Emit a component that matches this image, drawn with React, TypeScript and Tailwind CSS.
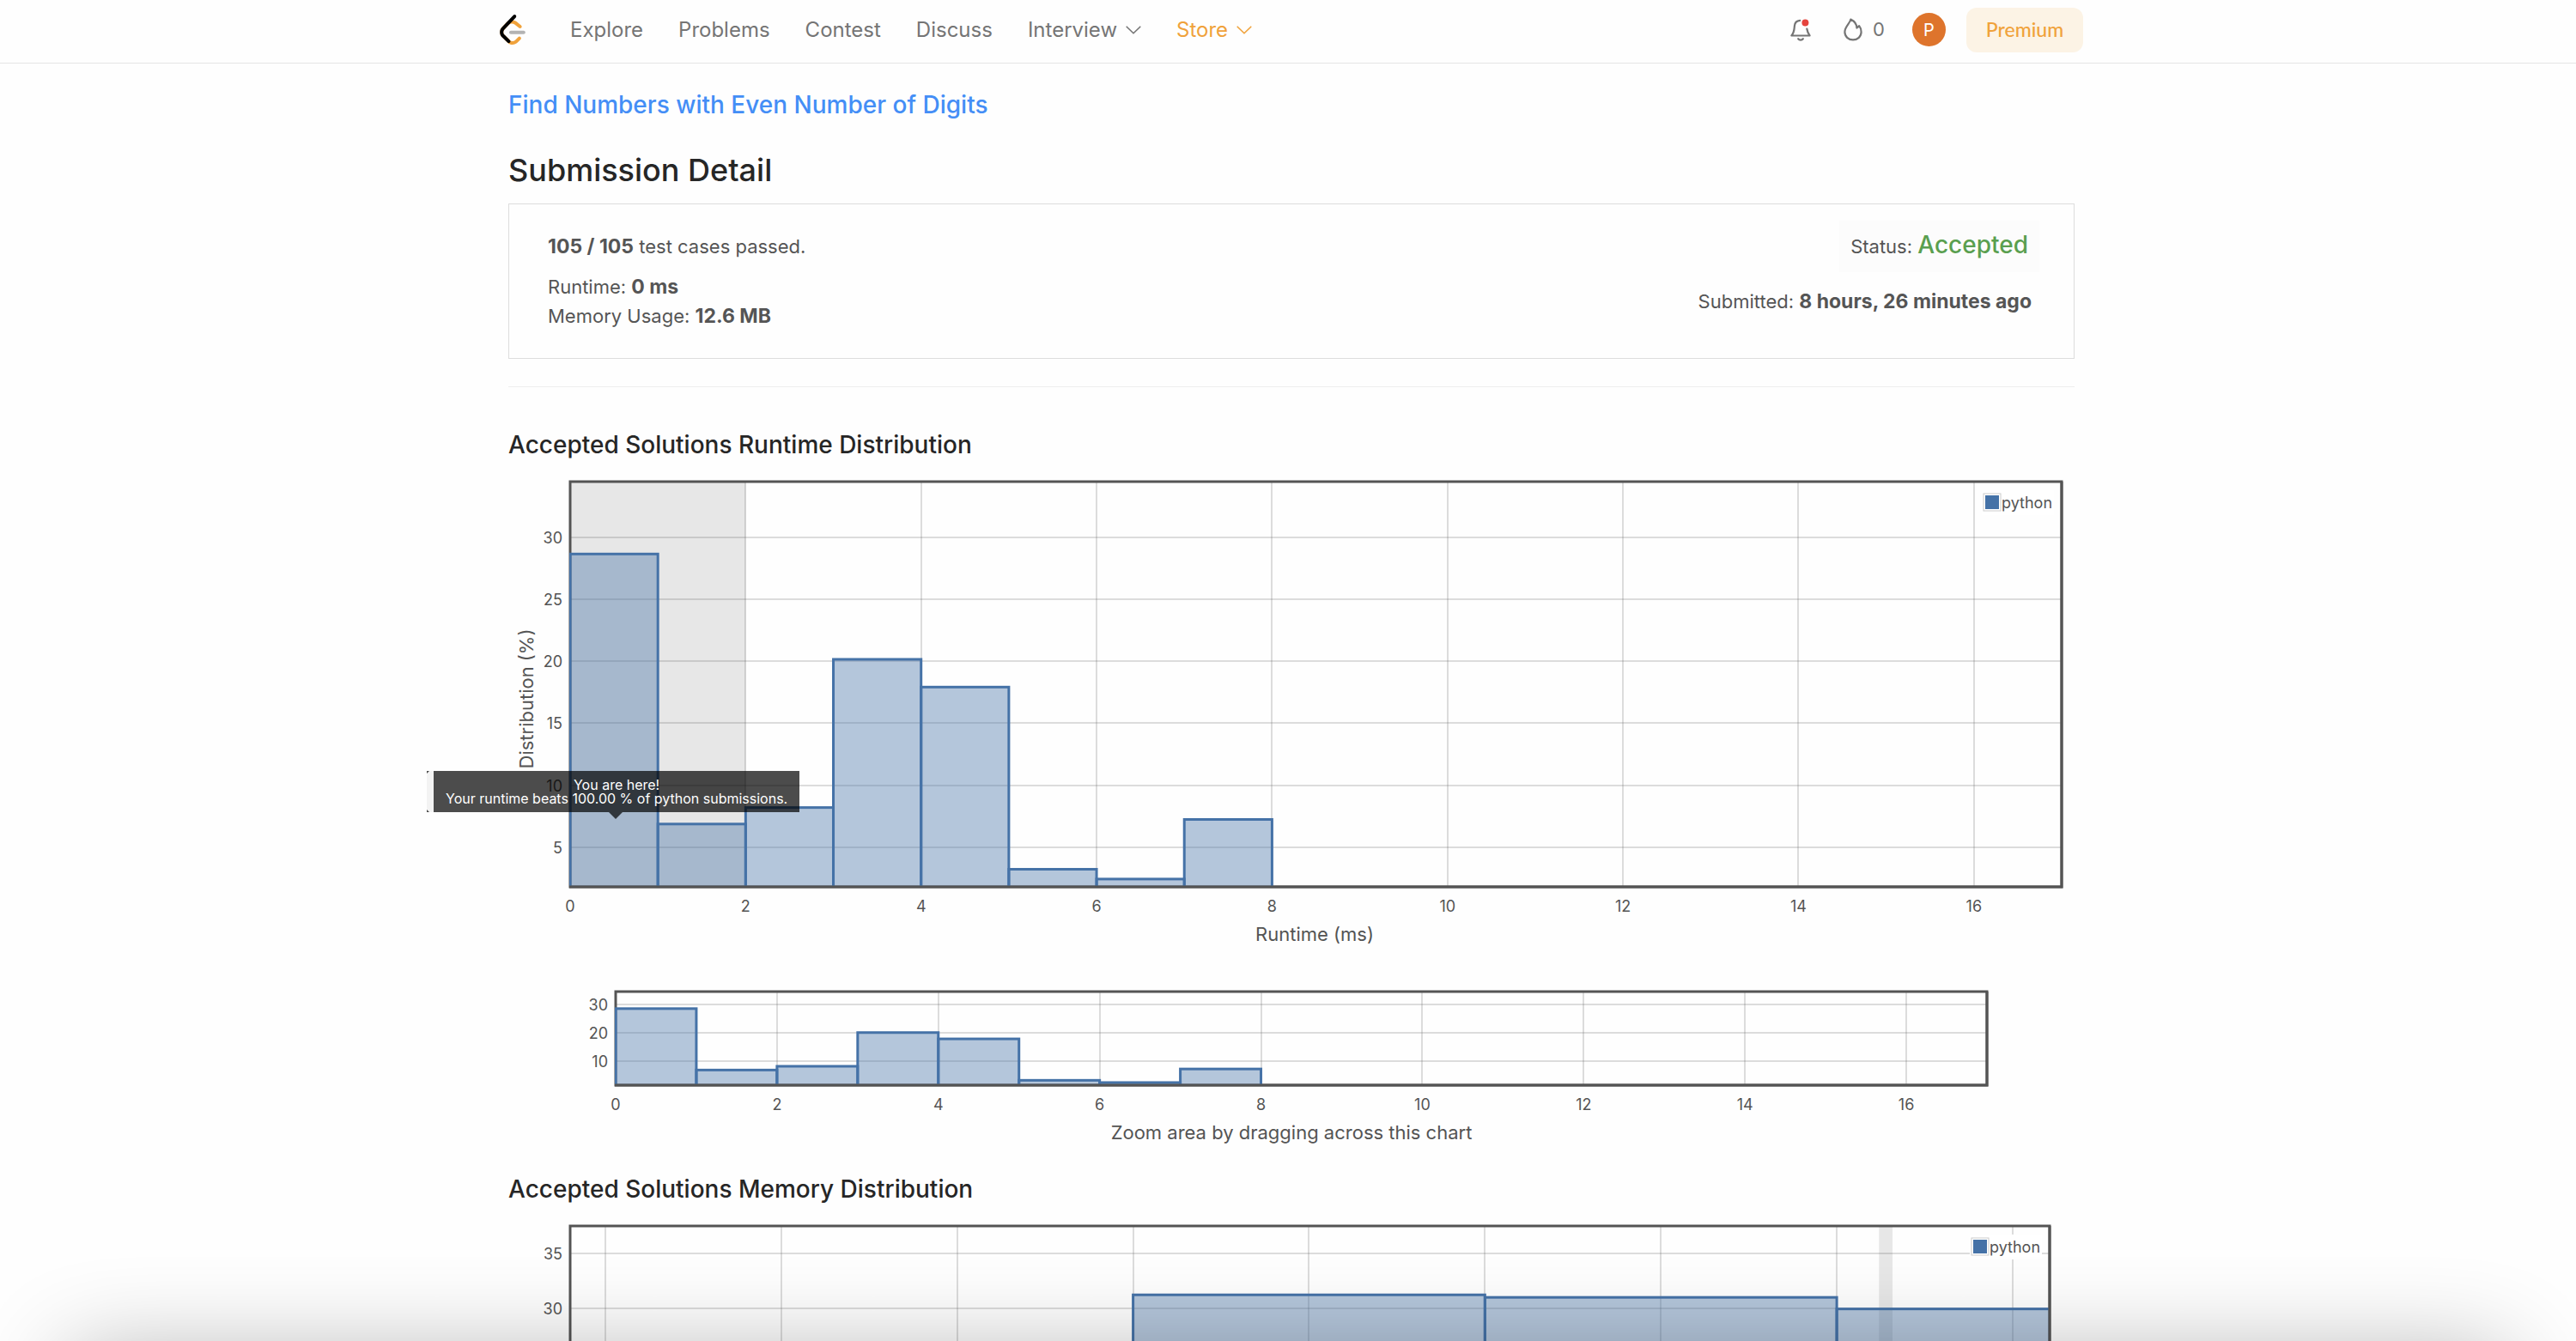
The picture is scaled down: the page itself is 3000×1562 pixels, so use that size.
import { ReactNode, useId } from "react";

type Bar = { from: number; to: number; value: number };
type Tick = { at: number; label?: string };

type HistogramProps = {
  title: string;
  height: number;
  frame: { x: number; y: number; w: number; h: number };
  xDomain: [number, number];
  yDomain: [number, number];
  xTicks: Tick[];
  yTicks: Tick[];
  bars: Bar[];
  band?: [number, number];
  legend?: string;
  children?: ReactNode;
};

const RUNTIME_BARS: Bar[] = [
  { from: 0, to: 1, value: 28.66 },
  { from: 1, to: 2, value: 6.87 },
  { from: 2, to: 3, value: 8.2 },
  { from: 3, to: 4, value: 20.16 },
  { from: 4, to: 5, value: 17.92 },
  { from: 5, to: 6, value: 3.22 },
  { from: 6, to: 7, value: 2.43 },
  { from: 7, to: 8, value: 7.24 },
];

const MEMORY_BARS: Bar[] = [
  { from: 3, to: 5, value: 31.2 },
  { from: 5, to: 7, value: 30.97 },
  { from: 7, to: 9, value: 29.92 },
];

const labelled = (values: number[]): Tick[] =>
  values.map((v) => ({ at: v, label: String(v) }));

const EVEN_TICKS = labelled([0, 2, 4, 6, 8, 10, 12, 14, 16]);

/** Bar histogram with a framed plot area, grid lines and axis labels. */
function Histogram({
  title,
  height,
  frame,
  xDomain,
  yDomain,
  xTicks,
  yTicks,
  bars,
  band,
  legend,
  children,
}: HistogramProps) {
  const clipId = useId();
  const sx = (v: number) =>
    frame.x + ((v - xDomain[0]) / (xDomain[1] - xDomain[0])) * frame.w;
  const sy = (v: number) =>
    frame.y + frame.h - ((v - yDomain[0]) / (yDomain[1] - yDomain[0])) * frame.h;
  const bottom = frame.y + frame.h;
  const right = frame.x + frame.w;

  return (
    <svg
      viewBox={`0 0 1824 ${height}`}
      className="block h-auto w-full overflow-visible"
      role="img"
      aria-label={title}
    >
      <clipPath id={clipId}>
        <rect x={frame.x - 1} y={frame.y} width={frame.w + 1} height={frame.h} />
      </clipPath>
      {band && (
        <rect
          x={sx(band[0])}
          y={frame.y}
          width={sx(band[1]) - sx(band[0])}
          height={frame.h}
          className="fill-[#e7e7e7]"
        />
      )}
      <g className="stroke-[#545454]/20" strokeWidth={2} shapeRendering="crispEdges">
        {xTicks.map((t) => (
          <line key={t.at} x1={sx(t.at)} x2={sx(t.at)} y1={frame.y} y2={bottom} />
        ))}
        {yTicks.map((t) => (
          <line key={t.at} x1={frame.x} x2={right} y1={sy(t.at)} y2={sy(t.at)} />
        ))}
      </g>
      <rect
        x={frame.x}
        y={frame.y}
        width={frame.w}
        height={frame.h}
        className="fill-none stroke-[#545454]"
        strokeWidth={3}
      />
      <g clipPath={`url(#${clipId})`}>
        {bars.map((b) => (
          <rect
            key={b.from}
            x={sx(b.from)}
            y={sy(b.value)}
            width={sx(b.to) - sx(b.from)}
            height={bottom + 8 - sy(b.value)}
            className="fill-[#4572a7]/40 stroke-[#4572a7]"
            strokeWidth={3}
          />
        ))}
      </g>
      <path
        d={`M${frame.x - 1} ${bottom}H${right}V${frame.y}`}
        className="fill-none stroke-[#545454]"
        strokeWidth={3}
      />
      <g className="fill-[#545454] text-[18px]">
        {xTicks.map(
          (t) =>
            t.label && (
              <text key={t.at} x={sx(t.at)} y={bottom + 29} textAnchor="middle">
                {t.label}
              </text>
            ),
        )}
        {yTicks.map(
          (t) =>
            t.label && (
              <text key={t.at} x={frame.x - 9} y={sy(t.at) + 7} textAnchor="end">
                {t.label}
              </text>
            ),
        )}
        {legend && (
          <g>
            <rect x={right - 93} y={frame.y + 10} width={84} height={29} className="fill-white" />
            <rect
              x={right - 91}
              y={frame.y + 14}
              width={20}
              height={20}
              className="fill-white stroke-[#cccccc]"
              strokeWidth={1}
            />
            <rect x={right - 89} y={frame.y + 16} width={16} height={16} className="fill-[#4572a7]" />
            <text x={right - 70} y={frame.y + 31}>
              {legend}
            </text>
          </g>
        )}
      </g>
      {children}
    </svg>
  );
}

function Logo() {
  return (
    <svg viewBox="0 0 95 111" className="h-[35px] w-[30px]" aria-hidden="true">
      <path
        fill="#f0a23b"
        d="M68.0063 83.0664C70.5 80.5764 74.5366 80.5829 77.0223 83.0809C79.508 85.579 79.5015 89.6226 77.0078 92.1127L65.9346 103.17C55.7187 113.371 39.06 113.519 28.6718 103.513C28.6117 103.456 23.9861 98.9201 8.72653 83.957C-1.42528 74.0029 -2.43665 58.0749 7.11648 47.8464L24.9282 28.7745C34.4095 18.6219 51.887 17.5122 62.7275 26.2789L78.9048 39.362C81.6444 41.5776 82.0723 45.5985 79.8606 48.3429C77.6488 51.0873 73.635 51.5159 70.8954 49.3003L54.7182 36.2173C49.0488 31.6325 39.1314 32.2622 34.2394 37.5006L16.4274 56.5727C11.7767 61.5522 12.2861 69.574 17.6456 74.8292C28.851 85.8169 37.4869 94.2846 37.4969 94.2942C42.8977 99.496 51.6304 99.4184 56.9331 94.1234L68.0063 83.0664Z"
      />
      <path
        fill="#b3b3b3"
        d="M41.1067 72.0014C37.5858 72.0014 34.7314 69.1421 34.7314 65.615C34.7314 62.0879 37.5858 59.2286 41.1067 59.2286H88.1245C91.6454 59.2286 94.4997 62.0879 94.4997 65.615C94.4997 69.1421 91.6454 72.0014 88.1245 72.0014H41.1067Z"
      />
      <path
        fill="#000"
        d="M49.9118 2.02335C52.3173 -0.55232 56.3517 -0.686894 58.9228 1.72277C61.494 4.13244 61.6284 8.17385 59.2229 10.7495L16.4276 56.5729C11.7768 61.552 12.2861 69.5738 17.6453 74.8292L37.4088 94.2091C39.9249 96.6764 39.968 100.72 37.505 103.24C35.042 105.761 31.0056 105.804 28.4895 103.337L8.72593 83.9567C-1.42529 74.0021 -2.43665 58.0741 7.1169 47.8463L49.9118 2.02335Z"
      />
    </svg>
  );
}

function BellIcon() {
  return (
    <svg viewBox="0 0 24 26" className="h-[26px] w-6" fill="none" aria-hidden="true">
      <g stroke="#757575" strokeWidth="2.2" strokeLinecap="round" strokeLinejoin="round">
        <path d="M11.2 1.9C7.6 2.2 5.2 4.6 4.9 8.2C4.6 12.2 4.6 15.6 1.4 19.5H22.6C20.6 17 19.8 14.5 19.3 11.5" />
        <path d="M9.2 23.2C10.6 25 13.4 25 14.8 23.2" />
      </g>
      <circle cx="17.4" cy="4.5" r="4" fill="#e5433d" />
    </svg>
  );
}

function FlameIcon() {
  return (
    <svg viewBox="0 0 22 27" className="h-[27px] w-[22px]" fill="none" aria-hidden="true">
      <path
        d="M8.3 1.6C7.4 6.4 1.4 9.8 1.4 16.3C1.4 21.6 5.6 25.4 11 25.4C16.4 25.4 20.6 21.6 20.6 16.3C20.6 13.2 19.8 11 18.2 9.1C17.4 10 16.6 10.9 15.4 11.5C15.2 7 12.4 3.6 8.3 1.6Z"
        stroke="#757575"
        strokeWidth="2.2"
        strokeLinejoin="round"
      />
    </svg>
  );
}

function ChevronDown() {
  return (
    <svg viewBox="0 0 18 10" className="h-[10px] w-[18px]" fill="none" aria-hidden="true">
      <path d="M1.2 1.2L9 8.8L16.8 1.2" stroke="currentColor" strokeWidth="1.6" strokeLinecap="round" strokeLinejoin="round" />
    </svg>
  );
}

function Header() {
  return (
    <header className="border-b border-[#e5e5e5] pl-2">
      <div className="mx-auto flex h-[73px] max-w-[1844px] items-center justify-between pb-1">
        <nav className="flex items-center gap-[41px] text-2xl text-[#757575]">
          <a href="#home" aria-label="Home" className="mr-[11px]">
            <Logo />
          </a>
          <a href="#explore">Explore</a>
          <a href="#problems">Problems</a>
          <a href="#contest">Contest</a>
          <a href="#discuss">Discuss</a>
          <button type="button" className="flex items-center gap-[10px]">
            Interview <ChevronDown />
          </button>
          <button type="button" className="flex items-center gap-[10px] text-[#f0a23b]">
            Store <ChevronDown />
          </button>
        </nav>
        <div className="flex items-center text-[#757575]">
          <button type="button" aria-label="Notifications" className="mr-[38px]">
            <BellIcon />
          </button>
          <button type="button" aria-label="Streak" className="mr-8 flex items-center gap-3 text-[22px]">
            <FlameIcon />
            <span>0</span>
          </button>
          <button
            type="button"
            className="mr-6 flex size-[39px] items-center justify-center rounded-full bg-[#de742c] text-xl text-white"
          >
            P
          </button>
          <a
            href="#premium"
            className="flex h-[52px] w-[136px] items-center justify-center rounded-xl bg-[#fcf3e5] font-['Lato'] text-[23px] font-medium text-[#f0a23b]"
          >
            Premium
          </a>
        </div>
      </div>
    </header>
  );
}

function Value({ children }: { children: ReactNode }) {
  return <strong className="text-[23px] leading-none">{children}</strong>;
}

function SummaryCard() {
  return (
    <section className="mt-[17px] flex justify-between border border-[#dddddd] pb-8 pl-[45px] pr-10 text-[22px] leading-[34px] text-[#555555]">
      <div className="pt-8">
        <p className="mb-[13px]">
          <Value>105 / 105</Value> test cases passed.
        </p>
        <p>
          Runtime: <Value>0 ms</Value>
        </p>
        <p>
          Memory Usage: <Value>12.6 MB</Value>
        </p>
      </div>
      <div className="flex flex-col items-end pt-[19px]">
        <p className="bg-[#fcfcfc] px-[13px] py-[13px]">
          Status: <span className="text-[28px] font-medium leading-none text-[#5a9f4f]">Accepted</span>
        </p>
        <p className="mr-[9px] mt-[17px]">
          Submitted: <Value>8 hours, 26 minutes ago</Value>
        </p>
      </div>
    </section>
  );
}

function RuntimeTooltip() {
  return (
    <div
      role="tooltip"
      className="absolute left-[-95px] top-[357px] text-center text-base leading-4 text-white"
    >
      <div className="border-l-8 border-[#f3f3f3]">
        <div className="bg-black/70 px-[14px] py-2">
          You are here!
          <br />
          Your runtime beats 100.00 % of python submissions.
        </div>
      </div>
      <div className="ml-[212px] h-2 w-4 bg-black/70 [clip-path:polygon(0_0,100%_0,50%_100%)]" />
      <span className="absolute left-0 top-0 size-[3px] bg-[#4d4d4d] [clip-path:polygon(0_0,100%_0,0_100%)]" />
      <span className="absolute bottom-2 left-0 size-[3px] bg-[#4d4d4d] [clip-path:polygon(0_0,100%_100%,0_100%)]" />
    </div>
  );
}

export default function App() {
  return (
    <div className="relative h-screen overflow-hidden bg-[#fefefe] font-['Inter',sans-serif]">
      <Header />
      <main className="pl-2">
        <div className="mx-auto max-w-[1824px] pt-8">
          <a href="#problem" className="block text-[28px] font-medium leading-8 text-[#448ef6]">
            Find Numbers with Even Number of Digits
          </a>
          <h1 className="mt-[38px] text-4xl font-medium leading-[44px] text-[#262626]">Submission Detail</h1>
          <SummaryCard />
          <hr className="mt-8 border-[#eeeeee]" />

          <h2 className="mt-[51px] text-[28px] font-medium leading-8 text-[#262626]">
            Accepted Solutions Runtime Distribution
          </h2>
          <div className="relative mt-[7px]">
            <Histogram
              title="Runtime distribution"
              height={580}
              frame={{ x: 72, y: 20, w: 1737, h: 472 }}
              xDomain={[0, 17]}
              yDomain={[1.8, 34.5]}
              xTicks={EVEN_TICKS}
              yTicks={labelled([5, 10, 15, 20, 25, 30])}
              bars={RUNTIME_BARS}
              band={[0, 2]}
              legend="python"
            >
              <g className="fill-[#545454] text-[22px]" textAnchor="middle">
                <text x={939} y={555}>
                  Runtime (ms)
                </text>
                <text transform="translate(29 273) rotate(-90)">Distribution (%)</text>
              </g>
            </Histogram>
            <RuntimeTooltip />
          </div>

          <Histogram
            title="Runtime overview"
            height={224}
            frame={{ x: 125, y: 34, w: 1597, h: 109 }}
            xDomain={[0, 17]}
            yDomain={[1.5, 34.7]}
            xTicks={EVEN_TICKS}
            yTicks={labelled([10, 20, 30])}
            bars={RUNTIME_BARS}
          >
            <text x={912} y={206} textAnchor="middle" className="fill-[#545454] text-[22px]">
              Zoom area by dragging across this chart
            </text>
          </Histogram>

          <h2 className="mt-6 text-[28px] font-medium leading-8 text-[#262626]">
            Accepted Solutions Memory Distribution
          </h2>
          <div className="mt-2">
            <Histogram
              title="Memory distribution"
              height={580}
              frame={{ x: 72, y: 19, w: 1723, h: 475 }}
              xDomain={[-0.2, 8.21]}
              yDomain={[0.4, 37.46]}
              xTicks={[0, 1, 2, 3, 4, 5, 6, 7, 8].map((at) => ({ at }))}
              yTicks={labelled([30, 35])}
              bars={MEMORY_BARS}
              band={[7.24, 7.317]}
              legend="python"
            />
          </div>
        </div>
      </main>
      <div className="pointer-events-none absolute inset-x-20 top-full mt-4 h-60 shadow-[0_0_110px_rgba(0,0,0,0.3)]" />
    </div>
  );
}
